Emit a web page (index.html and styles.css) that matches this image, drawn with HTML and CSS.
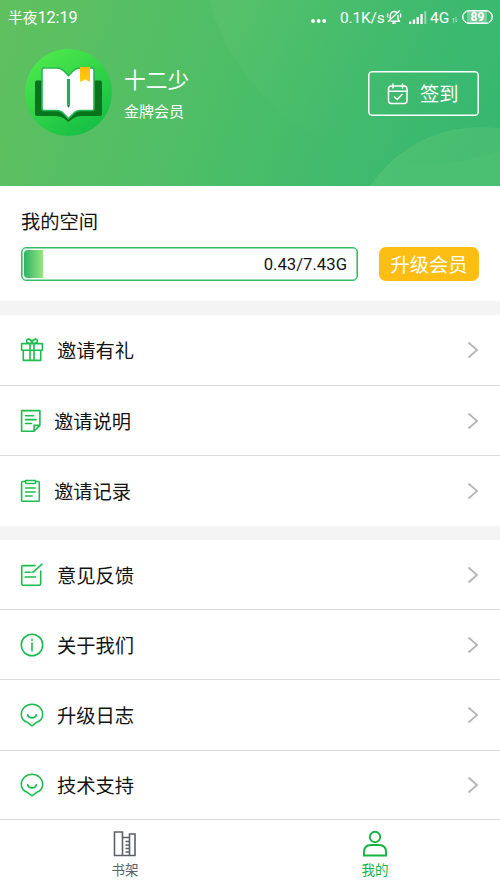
FILE: index.html
```html
<!DOCTYPE html>
<html lang="zh-CN">
<head>
<meta charset="utf-8">
<title>我的</title>
<link rel="stylesheet" href="styles.css">
</head>
<body>
<header class="hero">
  <svg class="hero-bg" viewBox="0 0 500 186" aria-hidden="true">
    <defs>
      <linearGradient id="ring" gradientUnits="userSpaceOnUse" x1="230" y1="10" x2="450" y2="164"><stop offset="0" stop-color="#78d080" stop-opacity=".16"/><stop offset=".65" stop-color="#60c878" stop-opacity="0"/><stop offset="1" stop-color="#20a868" stop-opacity=".1"/></linearGradient>
    </defs>
    <circle cx="480" cy="259" r="132" fill="#68cc78" fill-opacity=".36"/>
    <circle cx="425" cy="-60" r="224" fill="url(#ring)"/>
  </svg>
  <div class="status">
    <span class="clock">半夜<span class="digits">12:19</span></span>
    <svg class="dots" viewBox="0 0 18 6"><g fill="#fff"><circle cx="3" cy="3" r="1.9"/><circle cx="8.6" cy="3" r="1.9"/><circle cx="14.2" cy="3" r="1.9"/></g></svg>
    <span class="speed">0.1K/s</span>
    <svg class="mute" viewBox="0 0 16 16" fill="none" stroke="#fff" stroke-width="1.4" stroke-linecap="round" stroke-linejoin="round"><path d="M10.5 3.3C8 1.5 4.3 3.2 4.2 6.5v3M5 12.3h8.6L12 10V6.5M2.3 12.4 13.5 1.8M6.7 14h2.6M1.6 5v3M14.6 5v3"/></svg>
    <svg class="signal" viewBox="0 0 18 13"><path fill="#fff" d="M0 10.5h2.3V13H0zM3.8 8.5h2.3V13H3.8zM7.6 6h2.3v7H7.6zM11.4 3h2.3v10h-2.3z"/><path fill="#fff" fill-opacity=".45" d="M15.3 0h2v13h-2z"/></svg>
    <span class="net">4G</span>
    <svg class="arrows" viewBox="0 0 6 6" stroke="#fff" stroke-opacity=".65" fill="none" stroke-width=".8"><path d="M1.7 6V1L.5 2.2M4 0v5l1.2-1.2"/></svg>
    <span class="battery"><b>89</b></span>
  </div>
  <div class="profile">
    <svg class="avatar" viewBox="0 0 88 88">
      <defs>
        <linearGradient id="disc" x1="0.15" y1="0" x2="0.8" y2="1"><stop offset="0" stop-color="#50ea4c"/><stop offset="1" stop-color="#12bd43"/></linearGradient>
        <linearGradient id="mark" x1="0" y1="0" x2="0" y2="1"><stop offset="0" stop-color="#fdb90e"/><stop offset="1" stop-color="#ffce10"/></linearGradient>
      </defs>
      <circle cx="44.500" cy="43.500" r="43.500" fill="url(#disc)"/>
      <path d="M13 31.500h63q2 0 2 2v31.500q0 2-2 2H57q-5 0-8 2.500l-4.500 3.500-4.500-3.500q-3-2.500-8-2.500H13q-2 0-2-2V33.500q0-2 2-2z" fill="#08751d"/>
      <path d="M20 19h13q4 0 7 3l4.500 4.500L49 22q3-3 7-3h12q2 0 2 2V59.500q0 2-2 2H56q-4 0-7 3.500l-4.500 4.500-4.500-4.500q-3-3.500-7-3.500H20q-2 0-2-2V21q0-2 2-2z" fill="#fff" stroke="#24b953" stroke-width="1.600"/>
      <path d="M42.900 30h3.200v25.500h-3.200z" fill="#25a957"/><path d="m42.900 55.500 1.600 3.500 1.600-3.500z" fill="#0a7335"/>
      <path d="M56 18h10v15l-5-2.400-5 2.400z" fill="url(#mark)"/>
    </svg>
    <div class="who"><div class="name">十二少</div><div class="level">金牌会员</div></div>
    <div class="checkin">
      <svg viewBox="0 0 22 22" fill="none" stroke="#fff" stroke-width="1.5" stroke-linecap="round" stroke-linejoin="round"><rect x="1.500" y="3" width="18.500" height="17.500" rx="3"/><path d="M1.500 8.200h18.500M6 1v4M15.500 1v4M7.500 14l2.800 2.500 4.700-5"/></svg>
      <span>签到</span>
    </div>
  </div>
</header>

<section class="space">
  <div class="space-title">我的空间</div>
  <div class="space-row">
    <div class="meter"><div class="fill"></div><span>0.43/7.43G</span></div>
    <div class="upgrade">升级会员</div>
  </div>
</section>

<section class="list">
  <div class="row">
    <svg class="icon" viewBox="0 0 24 24"><path d="M1.600 5.600h20.800v6.600H1.600zM3.300 12.200h17.400v10.200H3.300zM10 5.600v16.800M14 5.600v16.800M12 5.200C9.500 5.500 6.400 5 6.500 3 6.600.3 11 .2 12 4.800 13 .2 17.400.3 17.500 3 17.600 5 14.500 5.500 12 5.200"/></svg>
    <span>邀请有礼</span><svg class="arrow" viewBox="0 0 12 18"><path d="m1.500 1.500 8.500 7.500-8.500 7.500"/></svg>
  </div>
  <div class="row narrow">
    <svg class="icon" viewBox="0 0 24 24"><path d="M1.600 1.600h18.300v14.800l-5.800 5.900H1.600zM19.900 16.400h-5.800v5.900M5.500 6.700h8M5.500 10.600h10.600M5.500 14.500h6"/></svg>
    <span>邀请说明</span><svg class="arrow" viewBox="0 0 12 18"><path d="m1.500 1.500 8.500 7.500-8.500 7.500"/></svg>
  </div>
  <div class="row narrow">
    <svg class="icon" viewBox="0 0 24 24"><path d="M5.500 2.500H2.700q-1.100 0-1.100 1.100v17.600q0 1.100 1.100 1.100h15.500q1.100 0 1.100-1.100V3.600q0-1.100-1.100-1.100h-2.800M5.500 1.500h10v1.700q0 1.300-1.300 1.300H6.800q-1.300 0-1.300-1.300zM5.600 9h9.500M5.600 13h9.500M5.600 17h6.500"/></svg>
    <span>邀请记录</span><svg class="arrow" viewBox="0 0 12 18"><path d="m1.500 1.500 8.500 7.500-8.500 7.500"/></svg>
  </div>
</section>

<section class="list last">
  <div class="row">
    <svg class="icon" viewBox="0 0 24 24"><path d="M15 2.600H3.200q-1.500 0-1.500 1.500v16.600q0 1.500 1.500 1.500h16q1.500 0 1.500-1.500V8M22 1.200l-8.500 7.600M5.200 9.200h5M12 9.200h.5M5.200 14h10.300"/></svg>
    <span>意见反馈</span><svg class="arrow" viewBox="0 0 12 18"><path d="m1.500 1.500 8.500 7.500-8.500 7.500"/></svg>
  </div>
  <div class="row">
    <svg class="icon" viewBox="0 0 24 24"><circle cx="12" cy="12" r="10.700"/><path d="M12 10v7.700M12 6.400v1"/></svg>
    <span>关于我们</span><svg class="arrow" viewBox="0 0 12 18"><path d="m1.500 1.500 8.500 7.500-8.500 7.500"/></svg>
  </div>
  <div class="row">
    <svg class="icon" viewBox="0 0 24 24"><path d="m12 22.800-4.300-3.200C4 18.300 1.300 15.200 1.300 11.300 1.300 5.800 6 1.300 12 1.300s10.700 4.500 10.700 10c0 3.900-2.700 7-6.400 8.300zM7.700 11.700c1 4.200 7.600 4.200 8.600 0"/></svg>
    <span>升级日志</span><svg class="arrow" viewBox="0 0 12 18"><path d="m1.500 1.500 8.500 7.500-8.500 7.500"/></svg>
  </div>
  <div class="row">
    <svg class="icon" viewBox="0 0 24 24"><path d="m12 22.800-4.300-3.200C4 18.300 1.300 15.200 1.300 11.300 1.300 5.800 6 1.300 12 1.300s10.700 4.500 10.700 10c0 3.900-2.700 7-6.400 8.300zM7.700 11.700c1 4.200 7.600 4.200 8.600 0"/></svg>
    <span>技术支持</span><svg class="arrow" viewBox="0 0 12 18"><path d="m1.500 1.500 8.500 7.500-8.500 7.500"/></svg>
  </div>
</section>

<nav class="tabs">
  <div class="tab">
    <svg viewBox="0 0 28 28"><path d="M3.500 2h8v23.500h-8zM11.500 7.500H18M18.500 4H24v21.500h-5.500zM11.500 25.500h7M14.500 11.500h4M14.500 15h4M14.500 18.500h4M14.500 22h4"/></svg>
    <span>书架</span>
  </div>
  <div class="tab active">
    <svg viewBox="0 0 28 28"><circle cx="14" cy="7" r="5.200"/><path d="M3 25.500v-3.300q0-7.200 7.200-7.200h7.600q7.200 0 7.200 7.200v3.300z"/></svg>
    <span>我的</span>
  </div>
</nav>
</body>
</html>
```
FILE: styles.css
```css
* { box-sizing: border-box; }
body {
  margin: 0;
  width: 500px;
  height: 889px;
  overflow: hidden;
  display: flex;
  flex-direction: column;
  background: #fff;
  color: #141414;
  font-family: Roboto, "Noto Sans CJK SC", sans-serif;
}
svg { display: block; flex: none; }
span, .name, .level, .space-title, .upgrade { white-space: nowrap; }

.hero {
  position: relative;
  height: 186px;
  flex: none;
  color: #fff;
  background: linear-gradient(110deg, #60c05f 0%, #4dbe67 45%, #3ab970 85%, #3ab970 100%);
}
.hero-bg { position: absolute; inset: 0; width: 500px; height: 186px; }

.status {
  position: relative;
  display: flex;
  align-items: center;
  height: 34px;
  padding: 0 7px 0 8px;
  font-size: 15px;
}
.clock { margin-right: auto; font-size: 14.7px; line-height: 20px; margin-top: 2px; }
.digits { font-size: 16.2px; }
.dots { width: 18px; height: 6px; margin: 8px 12px 0 0; }
.speed { width: 46px; margin-top: 1px; font-size: 15.5px; letter-spacing: -.2px; }
.mute { width: 16px; height: 16px; margin-right: 7px; }
.signal { width: 18px; height: 13px; margin-right: 3px; }
.net { width: 22px; margin-top: 1px; font-size: 15.5px; }
.arrows { width: 6px; height: 6px; margin: 5px 4px 0 0; }
.battery {
  display: flex;
  align-items: center;
  justify-content: center;
  width: 31px;
  height: 14px;
  border: 1px solid #fff;
  border-radius: 7px;
  box-shadow: inset 0 0 0 .5px #fff;
  background: linear-gradient(90deg, transparent 4px, rgba(255,255,255,.3) 4px, rgba(255,255,255,.3) 24px, transparent 24px);
  font-size: 12px;
  line-height: 12px;
}

.profile { position: relative; display: flex; padding: 15px 21px 0 24px; }
.avatar { width: 88px; height: 88px; }
.who { margin: 15px auto 0 12px; }
.name { font-size: 21.7px; line-height: 33px; }
.level { font-size: 15px; line-height: 22px; margin-top: 4px; }
.checkin {
  display: flex;
  align-items: center;
  gap: 11px;
  width: 111px;
  height: 45px;
  margin-top: 22px;
  padding-left: 18px;
  border: 1px solid #fff;
  border-radius: 4px;
  box-shadow: inset 0 0 0 .5px #fff;
  font-size: 19.3px;
}
.checkin svg { width: 22px; height: 22px; }
.checkin span { margin-top: -2px; }

.space { height: 115px; flex: none; padding: 22px 21px 0; }
.space-title { font-size: 19.3px; line-height: 30px; }
.space-row { display: flex; justify-content: space-between; margin-top: 9px; }
.meter {
  display: flex;
  align-items: center;
  justify-content: space-between;
  width: 337px;
  height: 34px;
  padding: 0 10px 0 1.5px;
  border: 1px solid #35bd66;
  border-radius: 5px;
  box-shadow: inset 0 0 0 .6px #35bd66;
  font-size: 16.7px;
}
.meter span { margin-top: 1px; }
.fill { width: 19px; height: 28px; border-radius: 4px 0 0 4px; background: linear-gradient(90deg, #2fb365, #96e581); }
.upgrade {
  width: 100px;
  height: 34px;
  border-radius: 7px;
  background: #fdbe13;
  color: #fff;
  font-size: 19.3px;
  line-height: 37px;
  text-align: center;
}

.list { flex: none; border-top: 14px solid #f4f4f4; }
.row {
  display: flex;
  align-items: center;
  height: 70.3px;
  padding: 1px 21px 0 20px;
  border-bottom: 1px solid #dcdcdc;
  font-size: 19.3px;
}
.list:not(.last) .row:first-child { height: 71px; padding-top: 0; }
.list:not(.last) .row:last-child { height: 69.6px; }
.row:last-child { border-bottom-color: transparent; }
.row span { margin: 0 auto 0 13px; }
.row.narrow span { margin-left: 10px; }
.icon { width: 24px; height: 24px; fill: none; stroke: #1cbd4e; stroke-width: 1.6; stroke-linejoin: round; stroke-linecap: round; }
.arrow { width: 12px; height: 18px; fill: none; stroke: #b5b5b5; stroke-width: 1.8; }

.last .row { padding-top: 0; }
.last .row:last-child { height: 68px; padding-top: 2px; }
.tabs { display: flex; flex: 1; border-top: 1px solid #dcdcdc; background: #fff; }
.tab {
  flex: 1;
  display: flex;
  flex-direction: column;
  align-items: center;
  padding-top: 10px;
  color: #5c6168;
  font-size: 13.5px;
  line-height: 20px;
}
.tab svg { width: 28px; height: 28px; fill: none; stroke: currentColor; stroke-width: 1.6; }
.tab span { margin-top: 2px; }
.tab.active { color: #14b443; }
.tab.active svg { stroke-width: 1.9; }
```
